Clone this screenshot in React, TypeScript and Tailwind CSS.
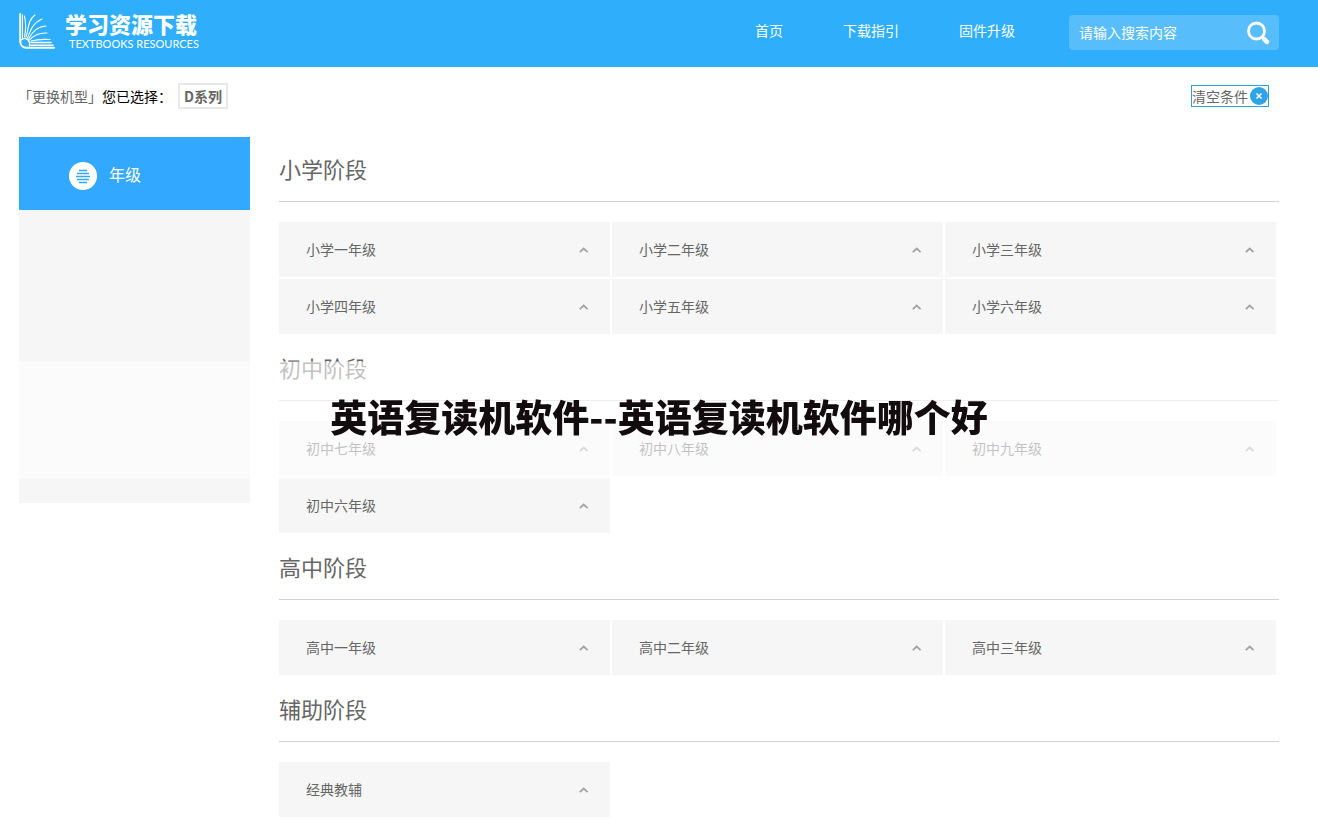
import { useState } from "react";

type Stage = {
	title: string;
	grades: string[];
};

const NAV_LINKS = ["首页", "下载指引", "固件升级"];

const STAGES: Stage[] = [
	{
		title: "小学阶段",
		grades: [
			"小学一年级",
			"小学二年级",
			"小学三年级",
			"小学四年级",
			"小学五年级",
			"小学六年级",
		],
	},
	{
		title: "初中阶段",
		grades: ["初中七年级", "初中八年级", "初中九年级", "初中六年级"],
	},
	{
		title: "高中阶段",
		grades: ["高中一年级", "高中二年级", "高中三年级"],
	},
	{
		title: "辅助阶段",
		grades: ["经典教辅"],
	},
];

const LogoMark = () => (
	<svg
		className="w-9 h-9"
		viewBox="0 0 36 36"
		fill="none"
		stroke="currentColor"
		strokeLinecap="round"
		aria-hidden="true"
	>
		<path strokeWidth={2} d="M1.200 1v27c0 4 2.500 6.800 6 6.800h27.800" />
		<path strokeWidth={1} d="M3.500 2v23" />
		<path strokeWidth={1.300} d="M2 27c2-2 5-2 7 0 1.500 1.500 2 3.500 1.500 6" />
		<path strokeWidth={1.100} d="M5.500 24C7 17 7 10 5.500 3" />
		<path strokeWidth={1.100} d="M7 24C10 16 8 8 16 2" />
		<path strokeWidth={1.100} d="M8.500 25C12 16 14 10 23 6" />
		<path strokeWidth={1.100} d="M9.500 26C14 18 18 14 27 13" />
		<path strokeWidth={1.100} d="M10.500 27C15 22 20 19.500 28 20" />
		<path strokeWidth={1.200} d="M12 28c5-1.500 11-2 19-1.500" />
		<path strokeWidth={1.500} d="M12 29.600h20M12 32.200h22" />
	</svg>
);

const SearchIcon = () => (
	<svg
		className="w-6 h-6"
		viewBox="0 0 24 24"
		fill="none"
		stroke="currentColor"
		aria-hidden="true"
	>
		<circle cx="9.500" cy="10" r="8" strokeWidth={2.8} />
		<path strokeWidth={4.5} strokeLinecap="round" d="M17 17.800l3 3" />
	</svg>
);

const ListBadge = () => (
	<svg className="w-7 h-7 mt-1" viewBox="0 0 28 28" aria-hidden="true">
		<circle cx="14" cy="14" r="14" fill="#fff" />
		<path
			stroke="#33a8ff"
			strokeWidth={1.3}
			d="M10 8.500h8M8 11.500h12M7 14.500h14M8 17.500h12M10 20.500h8"
		/>
	</svg>
);

const GradeCard = ({ label }: { label: string }) => (
	<button
		type="button"
		className="flex items-center justify-between h-[55px] pl-[27px] pr-5 bg-[#f6f6f6] text-sm text-[#666] cursor-pointer"
	>
		<span className="pb-0.5">{label}</span>
		<svg
			className="w-3 h-3 text-[#a3a3a3]"
			viewBox="0 0 12 12"
			fill="none"
			stroke="currentColor"
			strokeWidth={1.8}
			aria-hidden="true"
		>
			<path d="M1.800 8.200L5.700 4.500l3.900 3.700" />
		</svg>
	</button>
);

const App: React.FC = () => {
	const [keyword, setKeyword] = useState("");

	return (
		<div className="min-h-screen pb-5 bg-white font-['Noto_Sans_CJK_SC',sans-serif] text-sm">
			<header className="flex items-center justify-between h-[67px] pl-[19px] pr-[39px] pb-0.5 bg-[#2eaefb] text-white">
				<a href="#home" className="flex items-center gap-2.5 pb-1">
					<LogoMark />
					<span className="flex flex-col gap-1">
						<span className="text-[22px] leading-[22px] font-black">学习资源下载</span>
						<span className="pl-1 font-['Lato',sans-serif] text-[11px] leading-3">
							TEXTBOOKS RESOURCES
						</span>
					</span>
				</a>

				<div className="flex items-center">
					<nav className="flex gap-[60px] mr-[54px] pb-1.5">
						{NAV_LINKS.map((link) => (
							<a key={link} href={`#${link}`}>
								{link}
							</a>
						))}
					</nav>
					<form
						className="flex items-center w-[210px] h-[35px] pl-2.5 pr-2 rounded bg-white/20"
						onSubmit={(e) => e.preventDefault()}
					>
						<input
							type="text"
							aria-label="请输入搜索内容"
							placeholder="请输入搜索内容"
							value={keyword}
							onChange={(e) => setKeyword(e.target.value)}
							className="flex-1 min-w-0 pb-0.5 bg-transparent outline-none placeholder:text-white"
						/>
						<button type="submit" aria-label="搜索" className="cursor-pointer">
							<SearchIcon />
						</button>
					</form>
				</div>
			</header>

			{/* Current selection */}
			<div className="flex items-center justify-between h-[58px] pl-[18px] pr-[49px]">
				<div className="flex items-center">
					<a href="#model" className="text-[#666]">
						「更换机型」
					</a>
					<span className="text-black">您已选择：</span>
					<span className="ml-1.5 px-1 border-2 border-[#e9e9e9] leading-[22px] font-bold text-[#666]">
						D系列
					</span>
				</div>
				<button
					type="button"
					className="flex items-center gap-0.5 border border-[#2f9fd8] leading-5 text-[#666] cursor-pointer"
				>
					清空条件
					<svg className="w-[18px] h-[18px]" viewBox="0 0 18 18" aria-hidden="true">
						<circle cx="9" cy="9" r="9" fill="#2fa3e6" />
						<path stroke="#fff" strokeWidth={1.5} d="M6.500 6.500l5 5M11.500 6.500l-5 5" />
					</svg>
				</button>
			</div>

			<div className="flex items-start gap-[29px] pt-2.5 pl-[19px] pr-[39px]">
				<aside className="shrink-0 w-[231px] mt-0.5 bg-[#f6f6f6]">
					<button
						type="button"
						className="flex items-center gap-3 w-full h-[73px] pl-[50px] bg-[#33a8ff] text-base text-white cursor-pointer"
					>
						<ListBadge />
						年级
					</button>
					<div className="h-[293px]" />
				</aside>

				<main className="flex-1 min-w-0">
					{STAGES.map((stage) => (
						<section key={stage.title}>
							<h2 className="pt-[17px] pb-[17px] border-b border-[#d2d2d2] text-[22px] leading-8 text-[#666]">
								{stage.title}
							</h2>
							<div className="grid grid-cols-3 gap-0.5 pt-5 pr-[3px]">
								{stage.grades.map((grade) => (
									<GradeCard key={grade} label={grade} />
								))}
							</div>
						</section>
					))}
				</main>
			</div>

			{/* Title banner laid over the page */}
			<div className="fixed inset-x-0 top-1/2 -translate-y-1/2 pt-9 pb-11 bg-white/60 text-center">
				<h1 className="text-[37px] leading-[37px] font-black text-[#130c0e]">
					英语复读机软件--英语复读机软件哪个好
				</h1>
			</div>
		</div>
	);
};

export default App;
